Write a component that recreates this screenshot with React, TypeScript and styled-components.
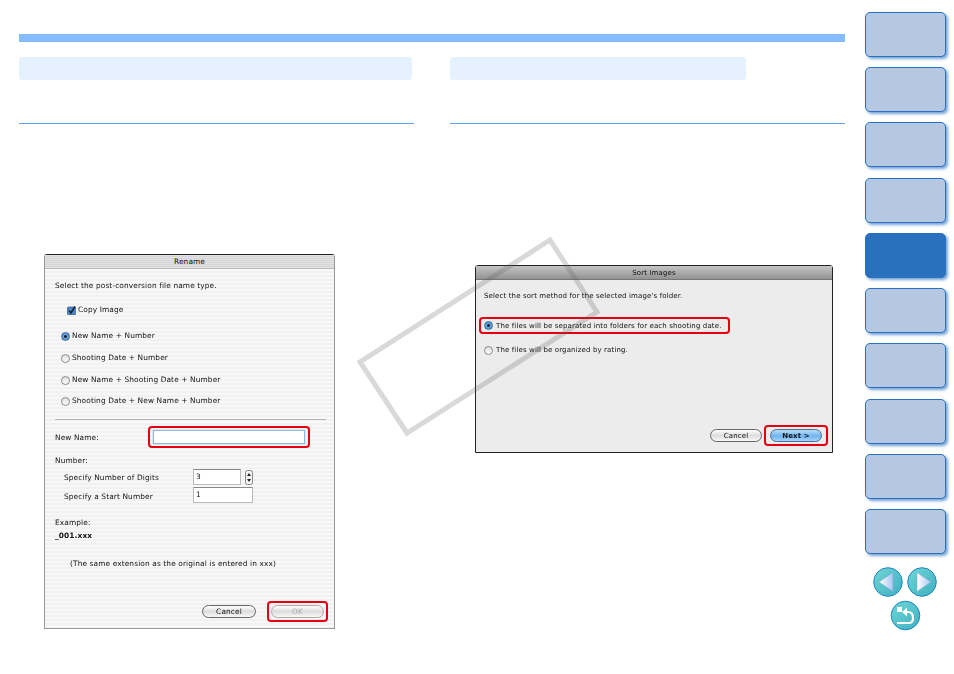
import React from "react";
import styled, { createGlobalStyle } from "styled-components";

const Global = createGlobalStyle`
  html, body { margin: 0; padding: 0; background: #fff; }
  body { font-family: "DejaVu Sans", sans-serif; }
`;

const Page = styled.div`
  position: relative;
  width: 954px;
  height: 674px;
  display: flex;
  padding-left: 19px;
  box-sizing: border-box;
  overflow: hidden;
`;
const Main = styled.main`
  width: 826px;
  padding-top: 34px;
`;
const TopBar = styled.div`
  height: 8px;
  background: #85bcff;
`;
const Columns = styled.div`
  display: grid;
  grid-template-columns: 395px 395px;
  column-gap: 36px;
`;
const Column = styled.section``;
const Heading = styled.div<{ $w: number }>`
  width: ${(p) => p.$w}px;
  height: 23px;
  margin-top: 15px;
  background: #e5f1fe;
  border-radius: 3px;
`;
const Rule = styled.div`
  height: 1px;
  margin-top: 43px;
  background: #66a3ee;
`;

const Dialog = styled.div<{ $w: number; $h: number; $top: number; $flat?: boolean }>`
  box-sizing: border-box;
  width: ${(p) => p.$w}px;
  height: ${(p) => p.$h}px;
  margin: ${(p) => p.$top}px 0 0 25px;
  border: 1px solid ${(p) => (p.$flat ? "#222" : "#999")};
  border-top-color: #222;
  border-radius: 3px 3px 0 0;
  display: flex;
  flex-direction: column;
  color: #111;
  font-size: ${(p) => (p.$flat ? 7.02 : 7.4)}px;
  letter-spacing: 0.12px;
  background: ${(p) =>
    p.$flat
      ? "#ececec"
      : "repeating-linear-gradient(180deg, #f1f1f1 0 2px, #f8f8f8 2px 4px)"};
  filter: blur(0.3px);
`;
const TitleBar = styled.div<{ $flat?: boolean }>`
  flex: none;
  height: 13px;
  line-height: 13px;
  text-align: center;
  background: ${(p) =>
    p.$flat
      ? "linear-gradient(180deg, #c4c4c4, #929292)"
      : "repeating-linear-gradient(180deg, #e2e2e2 0 1px, #d6d6d6 1px 2px)"};
  border-bottom: 1px solid ${(p) => (p.$flat ? "#777" : "#bbb")};
`;
const Body = styled.div<{ $pad: string }>`
  flex: 1;
  position: relative;
  display: flex;
  flex-direction: column;
  padding: ${(p) => p.$pad};
  min-height: 0;
`;
const Line = styled.div<{ $top?: number; $left?: number; $bold?: boolean }>`
  height: 10px;
  line-height: 10px;
  white-space: nowrap;
  margin-top: ${(p) => p.$top ?? 0}px;
  margin-left: ${(p) => p.$left ?? 0}px;
  font-weight: ${(p) => (p.$bold ? 700 : 400)};
`;
const OptionRow = styled.div<{ $top?: number; $left?: number }>`
  display: flex;
  align-items: center;
  gap: 2px;
  height: 10px;
  line-height: 10px;
  white-space: nowrap;
  margin-top: ${(p) => p.$top ?? 0}px;
  margin-left: ${(p) => p.$left ?? 0}px;
`;
const Radio = styled.span<{ $on?: boolean }>`
  flex: none;
  box-sizing: border-box;
  width: 9px;
  height: 9px;
  border-radius: 50%;
  border: 1px solid ${(p) => (p.$on ? "#3c6ea5" : "#8a8a8a")};
  background: ${(p) =>
    p.$on
      ? "radial-gradient(circle, #123 0 1.2px, #6fa8dc 1.6px, #3f7fc0 100%)"
      : "linear-gradient(180deg, #ddd, #fff)"};
`;
const Check = styled.svg`
  flex: none;
  width: 9px;
  height: 9px;
  display: block;
`;
const Divider = styled.div`
  height: 1px;
  margin-top: 13px;
  margin-right: 8px;
  background: #b5b5b5;
`;
const FieldRow = styled.div<{ $top: number }>`
  display: flex;
  align-items: center;
  margin-top: ${(p) => p.$top}px;
`;
const Label = styled.span<{ $w: number; $left?: number; $drop?: number }>`
  flex: none;
  width: ${(p) => p.$w}px;
  margin-left: ${(p) => p.$left ?? 0}px;
  margin-top: ${(p) => p.$drop ?? 0}px;
  white-space: nowrap;
`;
const Highlight = styled.div`
  box-sizing: border-box;
  border: 2px solid #e60012;
  border-radius: 4px;
  display: flex;
  align-items: center;
`;
const NameHL = styled(Highlight)`
  width: 162px;
  height: 22px;
  padding: 0 3px;
`;
const NameInput = styled.div`
  flex: 1;
  height: 12px;
  background: #fff;
  border: 1.5px solid #8fb8dc;
  box-shadow: 0 0 1px #6fa0d0;
`;
const NumInput = styled.div<{ $w: number; $h: number }>`
  box-sizing: border-box;
  width: ${(p) => p.$w}px;
  height: ${(p) => p.$h}px;
  line-height: ${(p) => p.$h - 3}px;
  padding-left: 2px;
  background: #fff;
  border: 1px solid #bbb;
  border-top-color: #888;
`;
const Stepper = styled.svg`
  width: 8px;
  height: 15px;
  margin-left: 4px;
`;
const Footer = styled.div<{ $right: number; $gap: number; $bottom: number }>`
  margin-top: auto;
  margin-right: ${(p) => p.$right}px;
  margin-bottom: ${(p) => p.$bottom}px;
  display: flex;
  justify-content: flex-end;
  align-items: center;
  gap: ${(p) => p.$gap}px;
`;
const Pill = styled.div<{ $w: number; $kind?: "default" | "off" }>`
  box-sizing: border-box;
  width: ${(p) => p.$w}px;
  height: 13px;
  line-height: 11px;
  text-align: center;
  border-radius: 7px;
  border: 1px solid ${(p) => (p.$kind === "off" ? "#aaa" : p.$kind === "default" ? "#4a6f9c" : "#666")};
  color: ${(p) => (p.$kind === "off" ? "#aaa" : "#111")};
  font-weight: ${(p) => (p.$kind === "default" ? 700 : 400)};
  background: ${(p) =>
    p.$kind === "default"
      ? "linear-gradient(180deg, #b8dcfa, #6fb4ee 55%, #a5d4f8)"
      : "linear-gradient(180deg, #fff, #ddd 50%, #f8f8f8)"};
`;
const BtnHL = styled(Highlight)<{ $padX: number }>`
  padding: 2px ${(p) => p.$padX}px;
`;
const OptionHL = styled(Highlight)`
  height: 17px;
  width: 251px;
  margin: 16px 0 0 -5px;
  padding: 0 0 0 3px;
`;

const Side = styled.nav`
  width: 81px;
  margin-left: 20px;
  padding-top: 11.7px;
  display: flex;
  flex-direction: column;
`;
const Tabs = styled.div`
  display: grid;
  grid-auto-rows: 45px;
  row-gap: 10.3px;
`;
const Tab = styled.div<{ $active?: boolean }>`
  box-sizing: border-box;
  border-radius: 5px;
  border: 1px solid #2a72c0;
  background: ${(p) => (p.$active ? "#2970bd" : "#b5c7e1")};
  box-shadow: 2px 2px 3px rgba(42, 114, 192, 0.65);
`;
const NavIcons = styled.svg`
  display: block;
  width: 81px;
  height: 80px;
  margin-top: 11px;
`;
const Stamp = styled.svg`
  position: absolute;
  left: 350px;
  top: 230px;
  width: 260px;
  height: 210px;
  pointer-events: none;
`;

export default function App() {
  return (
    <Page>
      <Global />
      <Main>
        <TopBar />
        <Columns>
          <Column>
            <Heading $w={393} />
            <Rule />
            <Dialog $w={291} $h={375} $top={130}>
              <TitleBar>Rename</TitleBar>
              <Body $pad="12px 0 6px 10px">
                <Line>Select the post-conversion file name type.</Line>
                <OptionRow $top={14} $left={12}>
                  <Check viewBox="0 0 9 9">
                    <rect x="0.5" y="1" width="8" height="8" rx="1" fill="#4f86c6" stroke="#2f5f99" strokeWidth="0.7" />
                    <path d="M2 4.5 L4 7 L8 0.5" fill="none" stroke="#0b1c33" strokeWidth="1.5" />
                  </Check>
                  Copy Image
                </OptionRow>
                <OptionRow $top={16} $left={6}><Radio $on />New Name + Number</OptionRow>
                <OptionRow $top={12} $left={6}><Radio />Shooting Date + Number</OptionRow>
                <OptionRow $top={12} $left={6}><Radio />New Name + Shooting Date + Number</OptionRow>
                <OptionRow $top={11} $left={6}><Radio />Shooting Date + New Name + Number</OptionRow>
                <Divider />
                <FieldRow $top={6}>
                  <Label $w={93}>New Name:</Label>
                  <NameHL><NameInput /></NameHL>
                </FieldRow>
                <Line $top={8}>Number:</Line>
                <FieldRow $top={3}>
                  <Label $w={129} $left={9} $drop={1}>Specify Number of Digits</Label>
                  <NumInput $w={48} $h={16}>3</NumInput>
                  <Stepper viewBox="0 0 8 15">
                    <rect x="0.5" y="0.5" width="7" height="14" rx="2" fill="#f4f4f4" stroke="#888" />
                    <path d="M4 3 L6 6 H2 Z M4 12 L6 9 H2 Z" fill="#222" />
                  </Stepper>
                </FieldRow>
                <FieldRow $top={2}>
                  <Label $w={129} $left={9} $drop={2}>Specify a Start Number</Label>
                  <NumInput $w={60} $h={16}>1</NumInput>
                </FieldRow>
                <Line $top={15}>Example:</Line>
                <Line $top={3} $bold>_001.xxx</Line>
                <Line $top={18} $left={15}>(The same extension as the original is entered in xxx)</Line>
                <Footer $right={6} $gap={11} $bottom={0}>
                  <Pill $w={54}>Cancel</Pill>
                  <BtnHL $padX={2}><Pill $w={53} $kind="off">OK</Pill></BtnHL>
                </Footer>
              </Body>
            </Dialog>
          </Column>
          <Column>
            <Heading $w={296} />
            <Rule />
            <Dialog $w={358} $h={188} $top={141} $flat>
              <TitleBar $flat>Sort Images</TitleBar>
              <Body $pad="11px 0 1px 8px">
                <Line>Select the sort method for the selected image's folder.</Line>
                <OptionHL>
                  <Radio $on />
                  <Line $left={3}>The files will be separated into folders for each shooting date.</Line>
                </OptionHL>
                <OptionRow $top={11}>
                  <Radio />
                  <Line $left={1}>The files will be organized by rating.</Line>
                </OptionRow>
                <Footer $right={4} $gap={2} $bottom={5}>
                  <Pill $w={52}>Cancel</Pill>
                  <BtnHL $padX={4}><Pill $w={52} $kind="default">Next &gt;</Pill></BtnHL>
                </Footer>
              </Body>
            </Dialog>
          </Column>
        </Columns>
      </Main>
      <Side>
        <Tabs>
          {Array.from({ length: 10 }, (_, i) => (
            <Tab key={i} $active={i === 4} />
          ))}
        </Tabs>
        <NavIcons viewBox="0 0 81 80">
          <defs>
            <linearGradient id="fill" x1="0" y1="0" x2="1" y2="1">
              <stop offset="0" stopColor="#6fd6d4" />
              <stop offset="1" stopColor="#3fb0c2" />
            </linearGradient>
            <linearGradient id="arrow" x1="0" y1="0" x2="1" y2="0">
              <stop offset="0" stopColor="#ffffff" />
              <stop offset="1" stopColor="#a9c6ee" />
            </linearGradient>
          </defs>
          <circle cx="23" cy="17" r="14.3" fill="url(#fill)" stroke="#1f86c4" strokeWidth="1" />
          <path d="M14 17 L28 7.5 V26.5 Z" fill="url(#arrow)" stroke="#7aa6d8" strokeWidth="0.5" />
          <circle cx="57" cy="17" r="14.3" fill="url(#fill)" stroke="#1f86c4" strokeWidth="1" />
          <path d="M66 17 L52 7.5 V26.5 Z" fill="url(#arrow)" stroke="#7aa6d8" strokeWidth="0.5" />
          <circle cx="40.5" cy="50.5" r="14.3" fill="url(#fill)" stroke="#1f86c4" strokeWidth="1" />
          <path d="M32 42 h5 v5 h-5 Z" fill="#fff" />
          <path d="M32 58 H44 Q48 58 48 53 Q48 47 43 47 H39" fill="none" stroke="#fff" strokeWidth="2.2" />
          <path d="M42 42.5 L37 47 L42 51.5 Z" fill="#fff" />
        </NavIcons>
      </Side>
      <Stamp viewBox="350 230 260 210">
        <polygon points="550,240 597,312 407,433 360,362" fill="none" stroke="rgba(90,90,90,0.23)" strokeWidth="5" />
      </Stamp>
    </Page>
  );
}
